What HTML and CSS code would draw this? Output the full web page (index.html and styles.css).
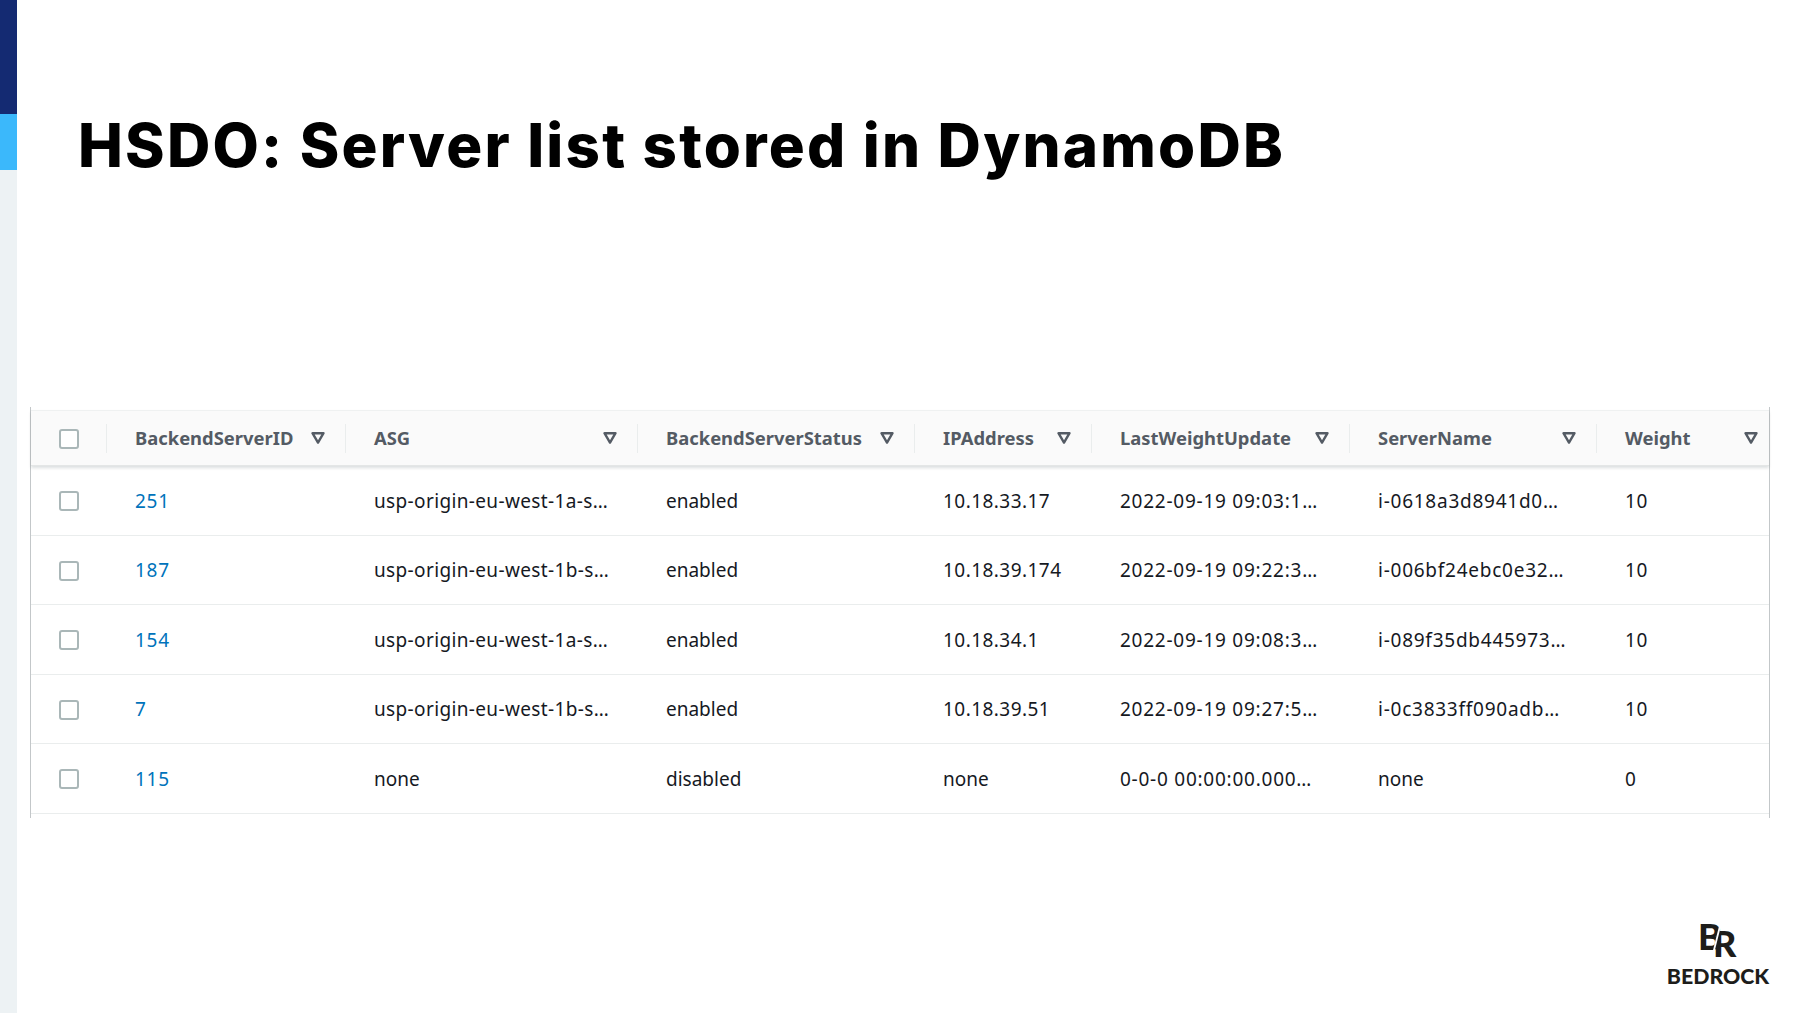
FILE: index.html
```html
<!DOCTYPE html>
<html lang="en">
<head>
<meta charset="utf-8">
<title>HSDO: Server list stored in DynamoDB</title>
<link rel="stylesheet" href="styles.css">
</head>
<body>
<div class="slide">
  <aside class="rail"><div class="rail-navy"></div><div class="rail-sky"></div><div class="rail-pale"></div></aside>
  <main class="content">
    <h1 class="title">HSDO: Server list stored in DynamoDB</h1>
    <section class="table">
      <div class="row head">
        <div class="cell check"><span class="box"></span></div>
        <div class="cell"><span>BackendServerID</span><svg class="filter" viewBox="0 0 14 12"><path d="M1.5 1.2h11L7 10.6z"/></svg></div>
        <div class="cell"><span>ASG</span><svg class="filter" viewBox="0 0 14 12"><path d="M1.5 1.2h11L7 10.6z"/></svg></div>
        <div class="cell"><span>BackendServerStatus</span><svg class="filter" viewBox="0 0 14 12"><path d="M1.5 1.2h11L7 10.6z"/></svg></div>
        <div class="cell"><span>IPAddress</span><svg class="filter" viewBox="0 0 14 12"><path d="M1.5 1.2h11L7 10.6z"/></svg></div>
        <div class="cell"><span>LastWeightUpdate</span><svg class="filter" viewBox="0 0 14 12"><path d="M1.5 1.2h11L7 10.6z"/></svg></div>
        <div class="cell"><span>ServerName</span><svg class="filter" viewBox="0 0 14 12"><path d="M1.5 1.2h11L7 10.6z"/></svg></div>
        <div class="cell last"><span>Weight</span><svg class="filter" viewBox="0 0 14 12"><path d="M1.5 1.2h11L7 10.6z"/></svg></div>
      </div>
      <div class="row">
        <div class="cell check"><span class="box"></span></div>
        <div class="cell link num">251</div>
        <div class="cell txt">usp-origin-eu-west-1a-s…</div>
        <div class="cell">enabled</div>
        <div class="cell ip">10.18.33.17</div>
        <div class="cell num">2022-09-19 09:03:1…</div>
        <div class="cell num">i-0618a3d8941d0…</div>
        <div class="cell num">10</div>
      </div>
      <div class="row">
        <div class="cell check"><span class="box"></span></div>
        <div class="cell link num">187</div>
        <div class="cell txt">usp-origin-eu-west-1b-s…</div>
        <div class="cell">enabled</div>
        <div class="cell ip">10.18.39.174</div>
        <div class="cell num">2022-09-19 09:22:3…</div>
        <div class="cell num">i-006bf24ebc0e32…</div>
        <div class="cell num">10</div>
      </div>
      <div class="row">
        <div class="cell check"><span class="box"></span></div>
        <div class="cell link num">154</div>
        <div class="cell txt">usp-origin-eu-west-1a-s…</div>
        <div class="cell">enabled</div>
        <div class="cell ip">10.18.34.1</div>
        <div class="cell num">2022-09-19 09:08:3…</div>
        <div class="cell num">i-089f35db445973…</div>
        <div class="cell num">10</div>
      </div>
      <div class="row">
        <div class="cell check"><span class="box"></span></div>
        <div class="cell link num">7</div>
        <div class="cell txt">usp-origin-eu-west-1b-s…</div>
        <div class="cell">enabled</div>
        <div class="cell ip">10.18.39.51</div>
        <div class="cell num">2022-09-19 09:27:5…</div>
        <div class="cell num">i-0c3833ff090adb…</div>
        <div class="cell num">10</div>
      </div>
      <div class="row">
        <div class="cell check"><span class="box"></span></div>
        <div class="cell link num">115</div>
        <div class="cell">none</div>
        <div class="cell">disabled</div>
        <div class="cell">none</div>
        <div class="cell num">0-0-0 00:00:00.000…</div>
        <div class="cell">none</div>
        <div class="cell num">0</div>
      </div>
    </section>
    <footer class="brand">
      <svg class="mark" viewBox="0 0 38 34">
        <text class="mark-text" x="1" y="25">B<tspan dx="-9" dy="7">R</tspan></text>
        <path class="mark-cut" d="M23 1 15 33"/>
      </svg>
      <div class="word">BEDROCK</div>
    </footer>
  </main>
</div>
</body>
</html>
```

FILE: styles.css
```css
* { box-sizing: border-box; }
html, body { margin: 0; background: #fff; }
.slide {
  display: flex;
  width: 1800px;
  height: 1013px;
  overflow: hidden;
  background: #fff;
}
.rail { display: flex; flex-direction: column; width: 17px; flex: none; }
.rail-navy { height: 114px; background: #142a72; }
.rail-sky { height: 56px; background: #3bb8fb; }
.rail-pale { flex: 1; background: #edf2f4; }

.content { flex: 1; display: flex; flex-direction: column; min-width: 0; }
.title {
  margin: 110px 0 0 61px;
  height: 70px;
  font: 800 60px/70px Inter, "Liberation Sans", sans-serif;
  letter-spacing: 2.2px;
  color: #000;
  white-space: nowrap;
}
.table {
  margin: 227px 0 0 13px;
  width: 1740px;
  padding-top: 3px;
  border-left: 1px solid #c3c7c9;
  border-right: 1px solid #c3c7c9;
  padding-bottom: 4px;
}
.row {
  display: grid;
  grid-template-columns: 76px 239px 292px 277px 177px 258px 247px 172px;
  height: 69.5px;
  padding-top: 2px;
  border-bottom: 1px solid #eaeded;
  font: 400 19px/1 "Noto Sans", "Open Sans", sans-serif;
  color: #16191f;
}
.cell {
  display: flex;
  align-items: center;
  min-width: 0;
  padding-left: 28px;
  white-space: nowrap;
}
.box {
  display: block;
  width: 20px;
  height: 20px;
  border: 2px solid #aab7b8;
  border-radius: 3px;
  background: #fff;
}
.link { color: #0073bb; }
.txt { letter-spacing: .36px; }
.ip { letter-spacing: .45px; }
.num { letter-spacing: .75px; }
.head {
  position: relative;
  height: 56px;
  padding-top: 1px;
  background: #fafafa;
  border-top: 1px solid #eff1f1;
  border-bottom: 1px solid #e4e6e6;
  box-shadow: 0 2px 3px rgba(0, 28, 36, .14);
  font-size: 18.4px;
  font-weight: 700;
  color: #545b64;
}
.head .cell {
  justify-content: space-between;
  padding-right: 20px;
  margin: 12px 0;
  border-right: 1px solid #eaeded;
}
.head .last { border-right: 0; padding-right: 11px; }
.filter { width: 14px; height: 12px; flex: none; margin-top: -1px; }
.filter path { fill: none; stroke: #545b64; stroke-width: 2.4; stroke-linejoin: round; }

.brand {
  margin: 107px 30px 0 auto;
  width: 104px;
  display: flex;
  flex-direction: column;
  align-items: center;
  color: #1d1d1b;
}
.mark { display: block; width: 38px; height: 34px; flex: none; margin-right: 4px; overflow: visible; }
.mark-text { font: 900 36px Lato, "Liberation Sans", sans-serif; fill: #1d1d1b; }
.mark-cut { stroke: #fff; stroke-width: 1.8; fill: none; }
.word {
  margin-top: 5px;
  font: 900 21.3px/24px Lato, "Liberation Sans", sans-serif;
}
```
